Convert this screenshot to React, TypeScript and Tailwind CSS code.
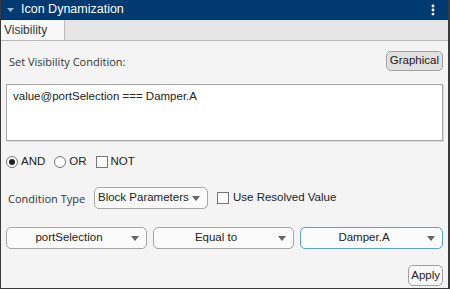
import { MoreVertical } from "lucide-react";

const arial = "font-['Liberation_Sans',Arial,sans-serif]";
const segoe = "font-['Open_Sans','Noto_Sans',sans-serif]";

function Caret() {
	return (
		<svg width="8" height="5" viewBox="0 0 8 5" className="shrink-0">
			<path d="M0 0 L8 0 L4 5 Z" fill="#666" />
		</svg>
	);
}

function Dropdown({
	label,
	className,
	focused = false,
	center = true,
}: {
	label: string;
	className: string;
	focused?: boolean;
	center?: boolean;
}) {
	return (
		<div
			className={`flex h-[22px] items-center rounded-[5px] border bg-[#fbfbfb] pr-[7px] text-[11.5px] text-[#222] ${
				focused ? "border-[#5aa0dc]" : "border-[#a6a6a6]"
			} ${className}`}
		>
			<span className={`flex-1 truncate ${center ? "text-center" : "pl-[3px]"}`}>
				{label}
			</span>
			<Caret />
		</div>
	);
}

function Box() {
	return (
		<span className="inline-block size-[12px] border border-[#767676] bg-white" />
	);
}

export default function App() {
	return (
		<div
			className={`flex h-[289px] w-[450px] flex-col overflow-hidden border-l border-r-2 border-b border-[#3a3a3a] bg-[#f4f4f4] ${arial}`}
		>
			<div className="flex h-[20px] shrink-0 items-center border-b border-[#1e2a38] bg-[#003a70] pl-[6px] pr-[8px] text-white">
				<svg width="7" height="4" viewBox="0 0 7 4" className="mr-[7px]">
					<path d="M0 0 L7 0 L3.5 4 Z" fill="#9fb3c8" />
				</svg>
				<span className="flex-1 text-[12.5px] leading-none">Icon Dynamization</span>
				<MoreVertical className="size-[14px]" strokeWidth={3} />
			</div>
			<div className="flex h-[21px] shrink-0 border-b border-[#b8b8b8] bg-[#e6e6e6]">
				<div className="flex w-[64px] items-center border-r border-[#bdbdbd] bg-[#f8f8f8] pl-[3px] text-[12px] text-[#333]">
					Visibility
				</div>
			</div>
			<div className="flex flex-1 flex-col px-[5px]">
				<div className="mt-[10px] flex h-[20px] items-center justify-between">
					<span className={`pl-[3px] pt-[3px] text-[11px] text-[#333] ${segoe}`}>
						Set Visibility Condition:
					</span>
					<button
						type="button"
						className="h-[20px] rounded-[5px] border border-[#a0a0a0] bg-[#e1e1e1] px-[3px] text-[11.5px] text-[#222]"
					>
						Graphical
					</button>
				</div>
				<div className="mt-[13px] h-[57px] border border-[#a8a8a8] bg-white px-[6px] pt-[3px] text-[11.5px] text-[#222] shadow-[1px_1px_0_#d8d8d8]">
					value@portSelection === Damper.A
				</div>
				<div className="mt-[14px] flex h-[14px] items-center text-[11.5px] text-[#222]">
					<span className="flex size-[12px] items-center justify-center rounded-full border border-[#767676] bg-white">
						<span className="size-[6px] rounded-full bg-[#222]" />
					</span>
					<span className="ml-[3px]">AND</span>
					<span className="ml-[9px] size-[12px] rounded-full border border-[#767676] bg-white" />
					<span className="ml-[3px]">OR</span>
					<span className="ml-[9px] flex">
						<Box />
					</span>
					<span className="ml-[3px]">NOT</span>
				</div>
				<div className="mt-[18px] flex h-[22px] items-center">
					<span className={`w-[88px] pl-[2px] pt-[2px] text-[11px] text-[#333] ${segoe}`}>
						Condition Type
					</span>
					<Dropdown label="Block Parameters" className="w-[114px]" center={false} />
					<span className="ml-[9px] flex">
						<Box />
					</span>
					<span className="ml-[4px] text-[11.5px] text-[#222]">
						Use Resolved Value
					</span>
				</div>
				<div className="mt-[18px] flex gap-[6px]">
					<Dropdown label="portSelection" className="w-[141px]" />
					<Dropdown label="Equal to" className="w-[141px]" />
					<Dropdown label="Damper.A" className="w-[143px]" focused />
				</div>
				<div className="mt-[16px] flex justify-end">
					<button
						type="button"
						className="h-[21px] rounded-[5px] border border-[#a0a0a0] bg-[#f8f8f8] px-[2px] text-[11.5px] text-[#222]"
					>
						Apply
					</button>
				</div>
			</div>
		</div>
	);
}
